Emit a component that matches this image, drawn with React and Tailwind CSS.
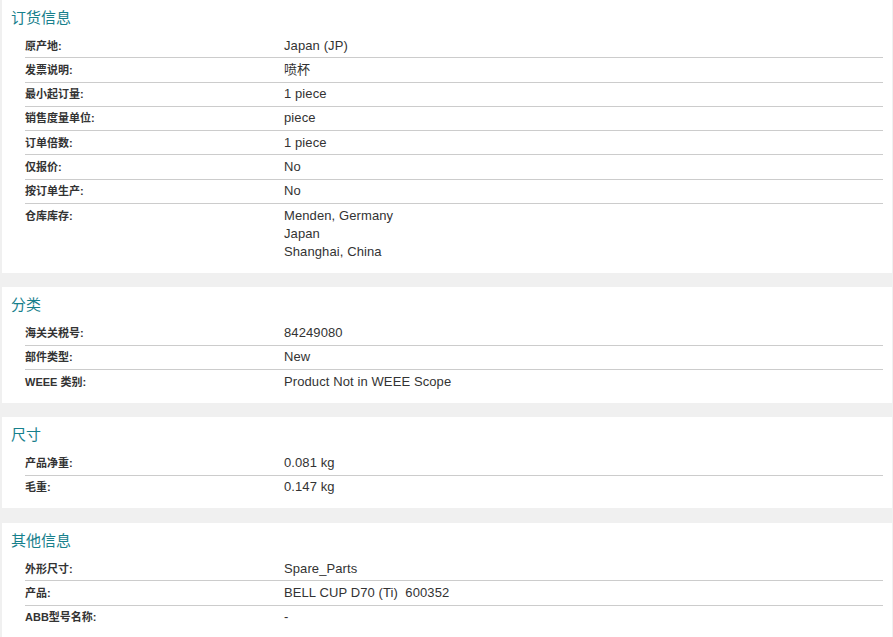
import React from "react";

const sections = [
	{
		title: "订货信息",
		rows: [
			["原产地:", "Japan (JP)"],
			["发票说明:", "喷杯"],
			["最小起订量:", "1 piece"],
			["销售度量单位:", "piece"],
			["订单倍数:", "1 piece"],
			["仅报价:", "No"],
			["按订单生产:", "No"],
			["仓库库存:", ["Menden, Germany", "Japan", "Shanghai, China"]],
		],
	},
	{
		title: "分类",
		rows: [
			["海关关税号:", "84249080"],
			["部件类型:", "New"],
			["WEEE 类别:", "Product Not in WEEE Scope"],
		],
	},
	{
		title: "尺寸",
		rows: [
			["产品净重:", "0.081 kg"],
			["毛重:", "0.147 kg"],
		],
	},
	{
		title: "其他信息",
		rows: [
			["外形尺寸:", "Spare_Parts"],
			["产品:", "BELL CUP D70 (Ti)  600352"],
			["ABB型号名称:", "-"],
		],
	},
];

const Row = ({ label, value, first }) => {
	const lines = Array.isArray(value) ? value : [value];
	return (
		<div
			className={`flex py-[2.65px] ${first ? "" : "border-t border-[#cccccc]"}`}
		>
			<div className="w-[259px] shrink-0 text-[11px] font-bold leading-[18px] text-[#333333]">
				{label}
			</div>
			<div className="text-[13px] leading-[18px] text-[#333333] whitespace-pre tracking-[0.1px]">
				{lines.map((l) => (
					<div key={l}>{l}</div>
				))}
			</div>
		</div>
	);
};

const Section = ({ title, rows }) => {
	return (
		<div className="bg-white pt-[8px] pb-[9.5px]">
			<h2 className="pl-[9px] text-[15px] leading-[20px] text-[#17808c] mb-[6px]">
				{title}
			</h2>
			<div className="ml-[23px] mr-[9px]">
				{rows.map(([label, value], i) => (
					<Row key={label} label={label} value={value} first={i === 0} />
				))}
			</div>
		</div>
	);
};

export default function App() {
	return (
		<div
			className="min-h-[637px] bg-[#f0f0f0] pl-[2px] pr-[1px] flex flex-col gap-[14.6px]"
			style={{ fontFamily: '"Liberation Sans", Arial, "Noto Sans CJK SC", sans-serif' }}
		>
			{sections.map((s) => (
				<Section key={s.title} title={s.title} rows={s.rows} />
			))}
		</div>
	);
}
